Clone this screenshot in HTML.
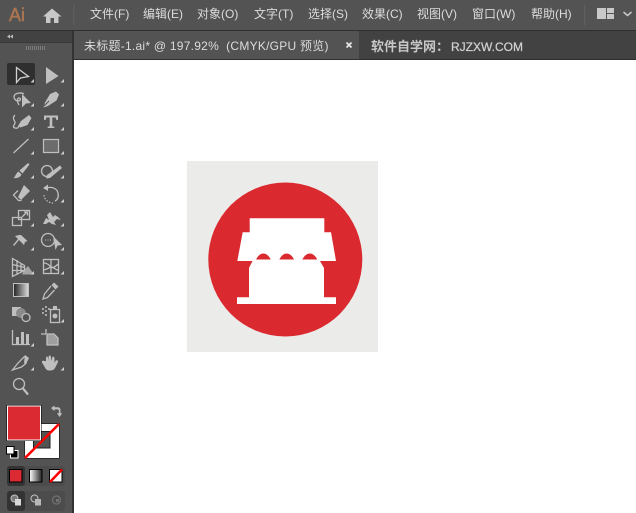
<!DOCTYPE html>
<html><head><meta charset="utf-8">
<style>
html,body{margin:0;padding:0;width:636px;height:513px;overflow:hidden;background:#fff}
svg{display:block}
text{font-family:"Liberation Sans","Noto Sans CJK SC",sans-serif}
.m{font-size:12px;fill:#dcdcdc}
.i{fill:none;stroke:#bfbfbf;stroke-width:1.300}
.f{fill:#bfbfbf}
</style></head><body>
<svg width="636" height="513" viewBox="0 0 636 513" xmlns="http://www.w3.org/2000/svg">
<rect width="636" height="513" fill="#fff"/>
<!-- top bar -->
<rect width="636" height="30" fill="#535353"/>
<rect y="30" width="636" height="1" fill="#2f2f2f"/>
<text x="9" y="21" font-size="18" fill="#ab7550" stroke="#ab7550" stroke-width=".5" style="font-family:'Liberation Sans',sans-serif">Ai</text>
<path fill="#c8c8c8" d="M52 8.500 43 16.500h3V23h4.500v-5h3.500v5H58.500v-6.500h3z"/>
<rect x="73" y="5" width="1.500" height="20" fill="#5e5e5e"/>
<text class="m" x="90" y="18">文件(F)</text>
<text class="m" x="143" y="18">编辑(E)</text>
<text class="m" x="197" y="18">对象(O)</text>
<text class="m" x="254" y="18">文字(T)</text>
<text class="m" x="308" y="18">选择(S)</text>
<text class="m" x="362" y="18">效果(C)</text>
<text class="m" x="417" y="18">视图(V)</text>
<text class="m" x="472" y="18">窗口(W)</text>
<text class="m" x="531" y="18">帮助(H)</text>
<rect x="584" y="5" width="1.500" height="20" fill="#5e5e5e"/>
<path fill="#c9c9c9" d="M597 8h9v11h-9zM607 8h7v5h-7zM607 14h7v5h-7z"/>
<path d="M623.500 12l4 3.500 4-3.500" fill="none" stroke="#c9c9c9" stroke-width="1.500"/>

<!-- tab bar -->
<rect x="73" y="31" width="563" height="29" fill="#424242"/>
<rect x="74" y="31" width="285" height="29" fill="#535353"/>
<rect x="72" y="31" width="2" height="482" fill="#333"/>
<text x="84" y="50" font-size="12" fill="#dcdcdc" letter-spacing=".25">未标题-1.ai* @ 197.92% &#160;(CMYK/GPU 预览)</text>
<path d="M346.500 42.500l5 5m0-5l-5 5" stroke="#e6e6e6" stroke-width="1.800"/>
<text x="371" y="51" font-size="13" font-weight="700" fill="#c8c8c8">软件自学网：</text>
<text x="451" y="51" font-size="12" fill="#d0d0d0" stroke="#d0d0d0" stroke-width=".25">RJZXW.COM</text>
<rect x="74" y="59" width="562" height="1" fill="#2f2f2f"/>

<!-- left panel -->
<rect y="31" width="72" height="482" fill="#535353"/>
<rect y="31" width="72" height="11" fill="#424242"/>
<rect y="42" width="72" height="1" fill="#383838"/>
<path d="M10 34.500l-3 2 3 2zM13 34.500l-3 2 3 2z" fill="#bdbdbd"/>
<path d="M26.500 46v4M28.500 46v4M30.500 46v4M32.500 46v4M34.500 46v4M36.500 46v4M38.500 46v4M40.500 46v4M42.500 46v4M44.500 46v4" stroke="#7c7c7c" stroke-width="1"/>

<!-- selected tool -->
<rect x="7" y="63" width="28" height="22" rx="2" fill="#2f2f2f"/>
<path d="M16.500 67.500v15l4-4.500 8-1.500z" fill="none" stroke="#d0d0d0" stroke-width="1.300"/>
<path class="f" d="M46 67l12.500 9-12.500 8z"/>
<!-- lasso -->
<path class="i" d="M24 94c-3-2-10-1-10 3 0 2 2 4 4 4 3 0 3-3 1-3s-2 4 0 7"/>
<path class="f" d="M22 94l9 9-5 .5-4 4z"/>
<!-- pen -->
<path class="f" d="M50 94l6-2.500 3 3-2.500 6-8.500 5.500-4.500 1.500 1.500-5z"/>
<path d="M44 106l5-5" stroke="#535353" stroke-width="1"/>
<!-- curvature -->
<path class="i" d="M15 115c-3 3-1 5 0 7s-4 5 0 6 3-2 5-3"/>
<path class="f" d="M21 121l8-6 2.500 3-4 7-7 2.500-2.500-1.500z"/>
<!-- type -->
<path class="f" d="M44 115.500h14v4.500h-1.500l-1-2.500H52.300v9h2v1.500h-6.600v-1.500h2v-9H46.500l-1 2.500H44z"/>
<!-- line -->
<path d="M13.500 153l15-14" stroke="#bfbfbf" stroke-width="1.200"/>
<!-- rect -->
<rect x="43.500" y="139.500" width="15" height="13" fill="#6c6c6c" stroke="#bfbfbf" stroke-width="1.200"/>
<!-- brush -->
<path class="f" d="M28 163l1.500 1.500-7 9-3-3zM18.500 171.500l3 3c-1 3-5 4-8 3.500 2-1.500 2.500-5 5-6.500z"/>
<!-- blob -->
<circle cx="47" cy="171" r="5.500" class="i"/>
<path class="f" d="M60 165.500l2 2.500-12 10-4 .5 1-3.500z"/>
<!-- eraser -->
<path class="f" d="M24 185l6 6-9 9-3-3z"/>
<path class="i" d="M18 190.500l-4.500 4.500 5 5.500h3"/>
<!-- rotate -->
<path class="i" d="M47 188c4-1.500 10 0 11 5s-1 7-3 8"/>
<path class="f" d="M48 184.500v6.500l-5-3z"/>
<path d="M44 195c0 4 4 8 9 8" fill="none" stroke="#bfbfbf" stroke-width="1.200" stroke-dasharray="1.500 1.500"/>
<!-- scale -->
<rect x="12.500" y="217.500" width="9" height="8" class="i"/>
<rect x="18.500" y="210.500" width="11" height="9" class="i"/>
<path d="M22 217l5-5m-3 0h3.500v3.500" class="i" stroke-width="1"/>
<!-- warp -->
<path class="f" d="M43 224l3-6 3 2-2-5 3-3 3 5 2-2 3 2 3 3-4-1-3 3 2 3-4-1-3-2-3 2z"/>
<!-- pin -->
<path class="f" d="M21 235l6.500 6-2.500 1-1 3-5-5-5 6-1-1 5-6-3-3 4-1z"/>
<!-- shape builder -->
<circle cx="48" cy="240" r="6.500" class="i"/>
<path d="M45 240h1m1.500 0h1m1.500 0h1" stroke="#bfbfbf" stroke-width="1"/>
<path class="f" d="M53 236l9 9-4.500.5-2 4.500z"/>
<!-- perspective -->
<path class="i" stroke-width="1" d="M12.500 258.500l12 7v5l-12 6zM12.500 264.500l12 3M12.500 270.500h12M17 260v14M21 263v9"/>
<path class="f" d="M24 270l4-4 6 8.500H22z" opacity=".75"/>
<!-- mesh -->
<rect x="43.500" y="259.500" width="15" height="14" class="i" stroke-width="1.100"/>
<path class="i" stroke-width="1" d="M51 260v13M44 263c3 0 5 2 7 4s5-1 7-3M44 270c3-1 5-2 7-3s4 3 7 3"/>
<!-- gradient -->
<defs>
<linearGradient id="g1"><stop offset="0" stop-color="#222"/><stop offset="1" stop-color="#ddd"/></linearGradient>
<linearGradient id="g2"><stop offset="0" stop-color="#fff"/><stop offset="1" stop-color="#222"/></linearGradient>
</defs>
<rect x="13.500" y="283.500" width="15" height="13" fill="url(#g1)" stroke="#bfbfbf" stroke-width="1"/>
<!-- eyedropper -->
<path class="f" d="M54 282.500l4.500 4-3 3-4-4.500z"/>
<path class="i" stroke-width="1.200" d="M51 286l-6.500 8-1.500 5 4.500-1.500 7-7.500"/>
<!-- blend -->
<rect x="12" y="307" width="9" height="9" class="f"/>
<circle cx="21" cy="313" r="5" fill="#8a8a8a"/>
<circle cx="26" cy="317.500" r="4" fill="#535353" stroke="#bfbfbf" stroke-width="1.300"/>
<!-- symbol -->
<path d="M42 308h2v2h-2zM45 306h2v2h-2zM48 308h2v2h-2zM42 312h2v2h-2zM45 310h2v2h-2zM45 314h2v2h-2z" fill="#a8a8a8"/>
<rect x="50.500" y="309.500" width="9" height="13" class="i" stroke-width="1.200"/>
<rect x="53" y="306" width="4" height="3" class="f"/>
<circle cx="55" cy="316" r="2.500" class="f"/>
<!-- graph -->
<path class="i" stroke-width="1.200" d="M12.500 330v14.500H30"/>
<path class="f" d="M16 337h3v7h-3zM21 332h3v12h-3zM26 334h3v10h-3z"/>
<!-- artboard -->
<path class="f" d="M47 334h7l4 4v7H47z" opacity=".7"/>
<path class="i" stroke-width="1.100" d="M41 334h5M46 329v5M47 334h7l4 4v7H47v-11"/>
<!-- slice -->
<path class="f" d="M25 355l4 3-3 6-2-1z"/>
<path class="i" stroke-width="1.300" d="M25 356l-7 7-5.500 7 9-3 5-4"/>
<!-- hand -->
<path class="f" d="M46 361v-3c0-2 2-2 2 0v3l.5-4c0-2 2.500-2 2.500 0v4l1-3c.5-2 2.500-1.500 2.500 0v5l1-2c1-1.500 3-.5 2.500 1l-3 6c-1 2-3 2.500-5 2.500-3 0-4-1-5-3l-3-5c-.5-1.500 1-2.500 2-1.500z"/>
<!-- zoom -->
<circle cx="19" cy="384" r="5.500" class="i" stroke-width="1.500"/>
<path d="M23 388.500l5 6" stroke="#bfbfbf" stroke-width="2.200"/>

<!-- small corner triangles -->
<g fill="#cfcfcf">
<path d="M34 79v3.500h-3.500zM64 79v3.500h-3.500z"/>
<path d="M64 103v3.500h-3.500zM34 103v3.500h-3.500z" />
<path d="M64 127v3.500h-3.500zM34 127v3.500h-3.500z"/>
<path d="M34 151v3.500h-3.500zM64 151v3.500h-3.500z"/>
<path d="M34 175v3.500h-3.500zM64 175v3.500h-3.500z"/>
<path d="M34 199v3.500h-3.500zM64 199v3.500h-3.500z"/>
<path d="M34 223v3.500h-3.500zM64 223v3.500h-3.500z"/>
<path d="M34 247v3.500h-3.500zM64 247v3.500h-3.500z"/>
<path d="M34 271v3.500h-3.500zM64 271v3.500h-3.500z"/>
<path d="M64 319v3.500h-3.500z"/>
<path d="M34 343v3.500h-3.500z"/>
<path d="M34 367v3.500h-3.500zM64 367v3.500h-3.500z"/>
</g>

<!-- fill/stroke -->
<rect x="24.500" y="423.500" width="35" height="35" fill="#000"/>
<rect x="25" y="424" width="34" height="34" fill="#fff"/>
<rect x="33.500" y="431.500" width="16.500" height="16.500" fill="#535353" stroke="#222" stroke-width="1"/>
<path d="M59 424l-34 34" stroke="#f00" stroke-width="2.600"/>
<rect x="6.500" y="405" width="35" height="36" fill="#000"/>
<rect x="7" y="405.500" width="34" height="35" fill="#fff"/>
<rect x="8" y="406.500" width="32" height="33" fill="#dc2a33"/>
<path d="M51 408l3.500-2.500v1.700h3c2 0 3 1 3 3v3h1.700L59.500 417 57 413.200h1.800v-2.500c0-.8-.5-1.300-1.300-1.300h-3v1.700z" fill="#bfbfbf"/>
<rect x="10.500" y="450.500" width="7.500" height="7.500" fill="#000" stroke="#fff" stroke-width="1"/>
<rect x="6.500" y="446.500" width="7.500" height="7.500" fill="#fff" stroke="#000" stroke-width="1"/>

<!-- color mode row -->
<rect x="7" y="466" width="58" height="20" rx="3" fill="#4c4c4c"/>
<rect x="7" y="466" width="18" height="20" rx="3" fill="#333"/>
<rect x="9.500" y="469.500" width="12.500" height="12.500" fill="#dc2a33" stroke="#000" stroke-width="1"/>
<rect x="29.500" y="469.500" width="12.500" height="12.500" fill="url(#g2)" stroke="#000" stroke-width="1"/>
<rect x="49.500" y="469.500" width="12.500" height="12.500" fill="#fff" stroke="#000" stroke-width="1"/>
<path d="M50 482l12-12.500" stroke="#f00" stroke-width="2.500"/>

<!-- draw mode row -->
<rect x="7" y="491" width="58" height="20" rx="3" fill="#4c4c4c"/>
<rect x="7" y="491" width="18" height="20" rx="3" fill="#333"/>
<circle cx="14.500" cy="498.500" r="3.500" fill="#7a7a7a" stroke="#c0c0c0" stroke-width="1"/>
<rect x="15" y="499" width="6" height="6.500" fill="#d8d8d8"/>
<circle cx="34.500" cy="498.500" r="3.500" fill="#535353" stroke="#c0c0c0" stroke-width="1"/>
<rect x="35" y="499" width="6" height="6.500" fill="#b8b8b8"/>
<circle cx="56.500" cy="500" r="4" fill="none" stroke="#727272" stroke-width="1.200"/>
<rect x="56" y="499" width="3" height="3" fill="#727272"/>

<!-- artwork -->
<rect x="187" y="161" width="191" height="191" fill="#ebebe9"/>
<circle cx="285.300" cy="259.500" r="77" fill="#db2a2f"/>
<path fill="#fff" d="M249.700 218.300h74.600v14H331l5 28.700H320l4 7v29.300h12v6.700H237v-6.700h12V268l3.500-7H237.300l5.400-28.700h7z"/>
<g fill="#db2a2f">
<path d="M256 259.500c2-3.800 4.300-6 7.300-6s5.500 2.200 7.500 6z"/>
<path d="M279.300 259.500c2-3.800 4.300-6 7.300-6s5.500 2.200 7.500 6z"/>
<path d="M302.300 259.500c2-3.800 4.500-6 7.500-6s5.500 2.200 7.500 6z"/>
</g>
</svg>
</body></html>
